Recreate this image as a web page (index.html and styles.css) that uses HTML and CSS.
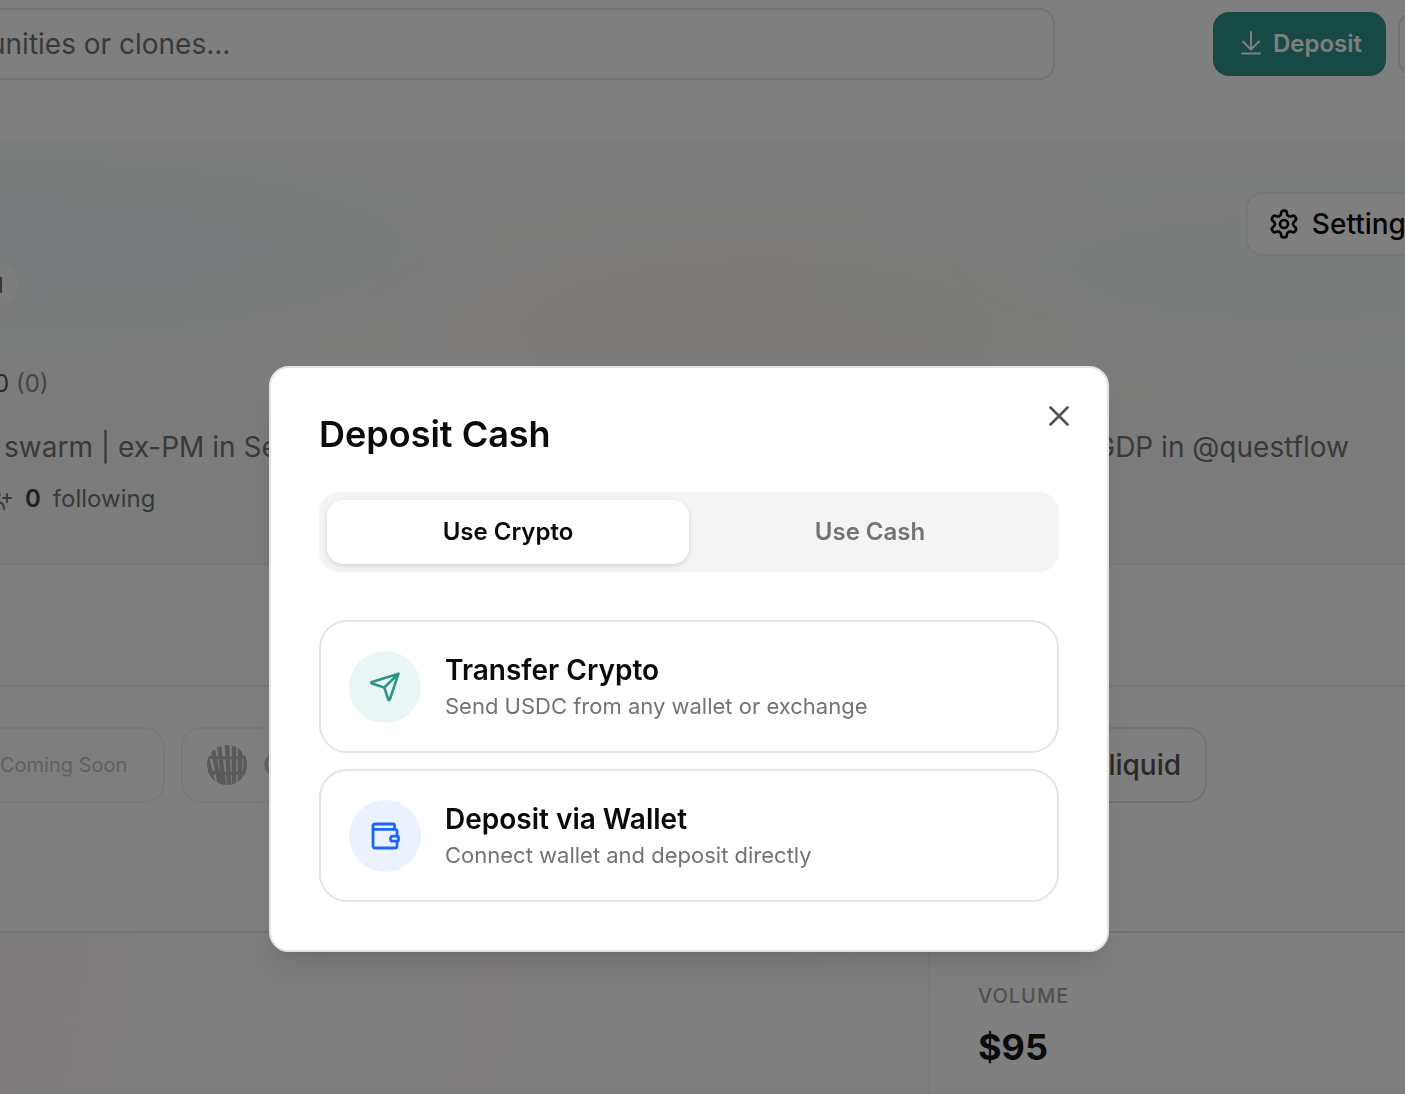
FILE: index.html
```html
<!DOCTYPE html>
<html lang="en">
<head>
    <meta charset="UTF-8">
    <meta name="viewport" content="width=device-width, initial-scale=1.0">
    <title>Deposit Cash</title>
    <link rel="stylesheet" href="styles.css">
</head>
<body>
    <header class="topbar">
        <input class="search" type="text" placeholder="unities or clones..." aria-label="Search">
        <div class="topbar-actions">
            <button class="btn-deposit" type="button">
                <svg width="20" height="24" viewBox="0 0 20 24" fill="none" stroke="currentColor" stroke-width="2" stroke-linecap="round" stroke-linejoin="round">
                    <path d="M10 1v17M2 10.500l8 8 8-8M1 22.500h18"/>
                </svg>
                Deposit
            </button>
            <button class="btn-outline" type="button" aria-label="Withdraw"></button>
        </div>
    </header>

    <section class="banner">
        <button class="btn-settings" type="button">
            <svg width="32" height="32" viewBox="0 0 24 24" fill="none" stroke="currentColor" stroke-width="2" stroke-linecap="round" stroke-linejoin="round">
                <path d="M12.22 2h-.44a2 2 0 0 0-2 2v.18a2 2 0 0 1-1 1.73l-.43.25a2 2 0 0 1-2 0l-.15-.08a2 2 0 0 0-2.73.73l-.22.38a2 2 0 0 0 .73 2.73l.15.1a2 2 0 0 1 1 1.72v.51a2 2 0 0 1-1 1.74l-.15.09a2 2 0 0 0-.73 2.73l.22.38a2 2 0 0 0 2.73.73l.15-.08a2 2 0 0 1 2 0l.43.25a2 2 0 0 1 1 1.73V20a2 2 0 0 0 2 2h.44a2 2 0 0 0 2-2v-.18a2 2 0 0 1 1-1.73l.43-.25a2 2 0 0 1 2 0l.15.08a2 2 0 0 0 2.73-.73l.22-.39a2 2 0 0 0-.73-2.73l-.15-.08a2 2 0 0 1-1-1.74v-.5a2 2 0 0 1 1-1.74l.15-.09a2 2 0 0 0 .73-2.73l-.22-.38a2 2 0 0 0-2.73-.73l-.15.08a2 2 0 0 1-2 0l-.43-.25a2 2 0 0 1-1-1.73V4a2 2 0 0 0-2-2z"/>
                <circle cx="12" cy="12" r="3"/>
            </svg>
            Settings
        </button>
        <div class="tag"><span class="tag-mark"></span></div>
        <div class="rating">0 <span class="rating-count">(0)</span></div>
        <div class="bio">
            <span>swarm | ex-PM in Se</span>
            <span>GDP in @questflow</span>
        </div>
        <div class="follow">
            <svg width="13" height="24" viewBox="0 0 13 24" fill="none" stroke="currentColor" stroke-width="2" stroke-linecap="round">
                <path d="M-3 3a5 5 0 0 1 1 8M-3 15c4 0 7 2 7 7M3 11h8M7 7v8"/>
            </svg>
            <strong>0</strong> <span>following</span>
        </div>
    </section>

    <section class="spacer"></section>

    <section class="chips">
        <div class="chip chip-first chip-faded"><span class="badge">Coming Soon</span></div>
        <div class="chip chip-second chip-faded">
            <svg width="40" height="40" viewBox="0 0 40 40" fill="none" stroke="currentColor">
                <clipPath id="disc"><circle cx="20" cy="20" r="20"/></clipPath>
                <g clip-path="url(#disc)">
                    <path stroke-width="4.500" d="M0 13l7 27M6 5l7 35M12 0l5 40M20 0l2 40M27 0v40M33 0v40M39 8l-1 26"/>
                    <path stroke-width="3" d="M0 12q20 2 40 0M0 27q20 3 40 0"/>
                </g>
            </svg>
            C
        </div>
        <div class="chip chip-last">liquid</div>
    </section>

    <section class="stats">
        <div class="chart"></div>
        <div class="stat">
            <div class="stat-label">VOLUME</div>
            <div class="stat-value">$95</div>
        </div>
    </section>

    <div class="overlay">
        <div class="modal" role="dialog" aria-modal="true" aria-labelledby="modalTitle">
            <button class="close" type="button" aria-label="Close">
                <svg width="20" height="20" viewBox="0 0 20 20" stroke="currentColor" stroke-width="2.600" stroke-linecap="round">
                    <path d="M1.500 1.500l17 17M18.500 1.500l-17 17"/>
                </svg>
            </button>
            <h2 id="modalTitle">Deposit Cash</h2>

            <div class="tabs" role="tablist">
                <button class="tab active" type="button" role="tab" aria-selected="true">Use Crypto</button>
                <button class="tab" type="button" role="tab" aria-selected="false">Use Cash</button>
            </div>

            <div class="options">
                <button class="option" type="button">
                    <span class="option-icon teal">
                        <svg width="32" height="32" viewBox="0 0 32 32" fill="none" stroke="currentColor" stroke-width="2.600" stroke-linecap="round" stroke-linejoin="round">
                            <path d="M29.500 2.700L3 10.900q-1.400.8 0 1.600l12.300 4 4 12q.8 1.400 1.500 0zM29.500 2.700L15.300 16.500"/>
                        </svg>
                    </span>
                    <span class="option-text">
                        <span class="option-title">Transfer Crypto</span>
                        <span class="option-desc">Send USDC from any wallet or exchange</span>
                    </span>
                </button>
                <button class="option" type="button">
                    <span class="option-icon blue">
                        <svg width="32" height="32" viewBox="0 0 32 32" fill="none" stroke="currentColor" stroke-width="2.800" stroke-linecap="round" stroke-linejoin="round">
                            <path d="M25.500 9V5.500a1.500 1.500 0 0 0-1.500-1.500H6.500a2.600 2.600 0 0 0 0 5.300H26.500a1.500 1.500 0 0 1 1.500 1.500V16M28 21.500V26.500a1.500 1.500 0 0 1-1.500 1.500H6a2 2 0 0 1-2-2V6.500"/>
                            <path d="M24 16.200h4.500a1 1 0 0 1 1 1v3a1 1 0 0 1-1 1H24a2.500 2.500 0 0 1 0-5z"/>
                        </svg>
                    </span>
                    <span class="option-text">
                        <span class="option-title">Deposit via Wallet</span>
                        <span class="option-desc">Connect wallet and deposit directly</span>
                    </span>
                </button>
            </div>
        </div>
    </div>
</body>
</html>
```
FILE: styles.css
```css
* {
    box-sizing: border-box;
}

body {
    font-family: Inter, "Liberation Sans", sans-serif;
    margin: 0;
    min-height: 100vh;
    display: flex;
    flex-direction: column;
    background-color: #fff;
    color: #0a0a0a;
    overflow: hidden;
}

button {
    font-family: inherit;
    cursor: pointer;
}

/* Top bar */
.topbar {
    display: flex;
    justify-content: space-between;
    padding: 8px 0 62px;
    white-space: nowrap;
}

.search {
    width: 76%;
    height: 72px;
    margin-left: -13px;
    padding: 0;
    border: 2px solid #e4e4e7;
    border-radius: 16px;
    font-family: inherit;
    font-size: 28px;
    background-color: #fff;
}

.search::placeholder {
    color: #737373;
    opacity: 1;
}

.topbar-actions {
    display: flex;
    gap: 12px;
    padding-top: 4px;
    margin-right: -60px;
}

.btn-deposit {
    display: flex;
    align-items: center;
    gap: 12px;
    height: 64px;
    padding: 0 24px 2px 28px;
    border: none;
    border-radius: 16px;
    background-color: #2f9488;
    color: #fff;
    font-size: 24px;
    font-weight: 600;
}

.btn-outline {
    width: 67px;
    height: 64px;
    border: 2px solid #d5eae7;
    border-radius: 16px;
    background-color: #fff;
}

/* Profile banner */
.banner {
    display: flex;
    flex-direction: column;
    height: 423px;
    padding-top: 50px;
    border-bottom: 2px solid #f0f0f1;
    background:
        radial-gradient(ellipse at 2% 25%, #ebf3f5, transparent 24%),
        radial-gradient(ellipse at 92% 30%, #f3f8f6, transparent 26%),
        radial-gradient(ellipse at 54% 45%, #f9f6f1, transparent 50%),
        #f8f9f9;
    white-space: nowrap;
}

.btn-settings {
    display: flex;
    align-items: center;
    align-self: flex-end;
    gap: 12px;
    height: 64px;
    margin-right: -38px;
    padding: 0 20px;
    border: 2px solid #e8eaea;
    border-radius: 16px;
    background-color: #fff;
    color: #0a0a0a;
    font-size: 28px;
    font-weight: 500;
}

.tag {
    display: flex;
    align-items: center;
    width: 18px;
    height: 42px;
    margin-top: 8px;
    border-radius: 0 20px 20px 0;
    background-color: #fafafa;
}

.tag-mark {
    width: 2px;
    height: 16px;
    background-color: #737373;
}

.rating {
    margin: 60px 0 0 -6px;
    font-size: 24px;
    line-height: 36px;
    color: #525252;
}

.rating-count {
    color: #8a8a8a;
}

.bio {
    display: flex;
    justify-content: space-between;
    padding: 22px 56px 0 4px;
    font-size: 28px;
    line-height: 46px;
    color: #737373;
}

.follow {
    display: flex;
    align-items: center;
    gap: 12px;
    margin-top: 10px;
    font-size: 24px;
    line-height: 38px;
    color: #737373;
}

.follow strong {
    font-weight: 600;
    color: #404040;
}

.spacer {
    height: 122px;
    border-bottom: 2px solid #ececee;
}

/* Venue chips */
.chips {
    display: flex;
    gap: 16px;
    height: 246px;
    padding: 40px 198px 0 0;
    border-bottom: 2px solid #e4e4e7;
}

.chip {
    display: flex;
    align-items: center;
    gap: 16px;
    height: 76px;
    padding: 0 24px;
    border: 2px solid #e4e4e7;
    border-radius: 20px;
    font-size: 28px;
    font-weight: 500;
    color: #525252;
    white-space: nowrap;
}

.chip-faded {
    border-color: #f2f2f3;
    color: #c0c0c0;
}

.chip-first {
    width: 165px;
    padding: 0;
    border-left: none;
    border-radius: 0 20px 20px 0;
}

.chip-second {
    width: 240px;
}

.chip-second svg {
    color: #b4b4b4;
}

.chip-last {
    margin-left: auto;
    width: 240px;
    justify-content: flex-end;
}

.badge {
    padding: 6px 10px 6px 0;
    border-radius: 8px;
    background-color: #fdfdfd;
    font-size: 20px;
    font-weight: 400;
}

.stats {
    display: flex;
    flex: 1;
}

.chart {
    width: 930px;
    border-right: 2px solid #f2f2f3;
    background: linear-gradient(100deg, #fdf9fa, #fffefe);
}

.stat {
    flex: 1;
    padding: 48px;
}

.stat-label {
    font-size: 20px;
    font-weight: 500;
    line-height: 30px;
    letter-spacing: 1px;
    color: #a1a1a1;
}

.stat-value {
    margin-top: 12px;
    font-size: 36px;
    font-weight: 700;
    line-height: 48px;
    color: #171717;
}

/* Deposit dialog */
.overlay {
    position: fixed;
    inset: 0;
    display: flex;
    justify-content: center;
    align-items: flex-start;
    padding: 366px 27px 0 0;
    background-color: rgba(0, 0, 0, 0.5);
}

.modal {
    position: relative;
    width: 100%;
    max-width: 840px;
    padding: 48px;
    border: 2px solid #e4e4e7;
    border-radius: 20px;
    background-color: #fff;
    box-shadow: 0 20px 30px -6px rgba(0, 0, 0, 0.1), 0 8px 12px -8px rgba(0, 0, 0, 0.1);
}

.modal h2 {
    margin: 0 0 40px;
    font-size: 36px;
    font-weight: 600;
    line-height: 36px;
}

.close {
    position: absolute;
    top: 38px;
    right: 38px;
    display: flex;
    padding: 0;
    border: none;
    background: none;
    color: #525252;
}

.tabs {
    display: flex;
    height: 80px;
    margin-bottom: 48px;
    padding: 8px;
    border-radius: 20px;
    background-color: #f4f4f4;
}

.tab {
    flex: 1;
    padding: 0 0 2px;
    border: none;
    border-radius: 16px;
    background: none;
    color: #737373;
    font-size: 24px;
    font-weight: 600;
}

.tab.active {
    background-color: #fff;
    color: #0a0a0a;
    box-shadow: 0 2px 6px rgba(0, 0, 0, 0.1), 0 2px 4px -2px rgba(0, 0, 0, 0.1);
}

.options {
    display: flex;
    flex-direction: column;
    gap: 16px;
}

.option {
    display: flex;
    align-items: center;
    gap: 24px;
    padding: 28px;
    border: 2px solid #e4e4e7;
    border-radius: 28px;
    background-color: #fff;
    text-align: left;
}

.option-icon {
    display: flex;
    align-items: center;
    justify-content: center;
    width: 72px;
    height: 72px;
    border-radius: 50%;
}

.option-icon.teal {
    background-color: #eaf6f5;
    color: #2f9488;
}

.option-icon.blue {
    background-color: #ebf1fe;
    color: #1f66f5;
}

.option-text {
    display: flex;
    flex-direction: column;
}

.option-title {
    font-size: 28px;
    font-weight: 600;
    line-height: 40px;
    color: #0a0a0a;
}

.option-desc {
    font-size: 22px;
    line-height: 33px;
    color: #737373;
}
```
